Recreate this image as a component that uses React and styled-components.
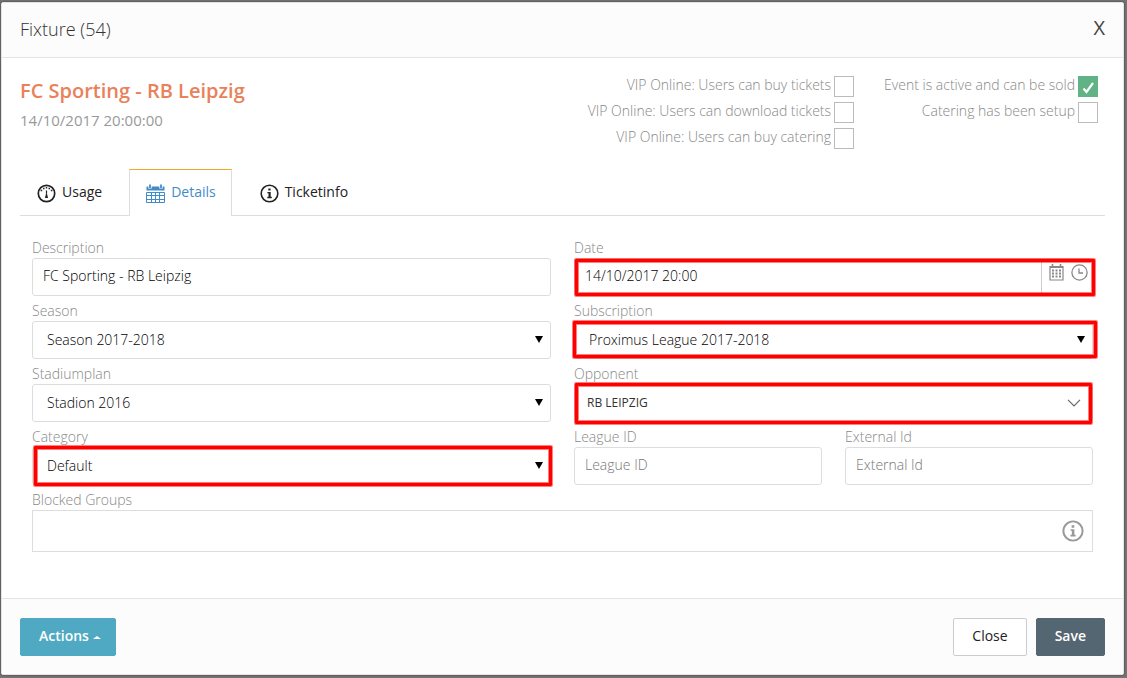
import React, { useState } from 'react';
import styled, { createGlobalStyle } from 'styled-components';

const GlobalStyle = createGlobalStyle`
	*, *::before, *::after {
		box-sizing: border-box;
	}

	body {
		margin: 0;
		background: #747474;
		color: #333;
		font-family: 'Open Sans', 'Liberation Sans', sans-serif;
		font-size: 14px;
		line-height: 20px;
	}

	button, input, select {
		margin: 0;
		font: inherit;
		color: inherit;
	}
`;

const Backdrop = styled.div`
	display: flex;
	min-height: 100vh;
	padding: 2px 3px 3px 1px;
`;

const Modal = styled.section`
	flex: 1;
	display: flex;
	flex-direction: column;
	border: 1px solid #e4e4e4;
	border-radius: 2px;
	background: #fff;
	box-shadow: 0 0 2px rgba(0, 0, 0, 0.6);
	overflow: hidden;
`;

const Header = styled.header`
	display: flex;
	justify-content: space-between;
	align-items: center;
	height: 55px;
	padding: 0 18px 2px;
	border-bottom: 1px solid #e5e5e5;
	background: #fcfcfc;
`;

const Title = styled.h1`
	margin: 0;
	font-size: 18px;
	font-weight: 300;
`;

const CloseIcon = styled.button`
	padding: 0 0 2px;
	border: 0;
	background: none;
	color: #444;
	font-size: 20px;
	cursor: pointer;
`;

const Body = styled.div`
	flex: 1;
	padding: 18px 18px 0;
`;

const Summary = styled.div`
	display: flex;
	justify-content: space-between;
	min-height: 93px;
`;

const EventName = styled.h2`
	margin: 0;
	color: #e9815a;
	font-size: 20px;
	font-weight: 600;
	line-height: 30px;
`;

const EventDate = styled.p`
	margin: 0;
	color: #999;
	font-size: 15px;
	line-height: 28px;
`;

const Flags = styled.div`
	display: flex;
	gap: 30px;
	padding-right: 7px;
`;

const FlagColumn = styled.div`
	display: flex;
	flex-direction: column;
	align-items: flex-end;
	gap: 5px;
`;

const FlagLabel = styled.label`
	display: flex;
	gap: 3px;
	height: 21px;
	color: #888;
	font-weight: 300;
	line-height: 18px;
`;

const FlagBox = styled.input`
	appearance: none;
	width: 20px;
	height: 21px;
	border: 1px solid #bbb;
	background: #fff;

	&:checked {
		border-color: #5fb384;
		background: #5fb384;
	}
`;

const BoxWrap = styled.span`
	position: relative;
	display: flex;
`;

const Tick = styled.svg`
	position: absolute;
	left: 4px;
	top: 5px;
	pointer-events: none;
`;

const Tabs = styled.nav`
	display: flex;
	gap: 11px;
	height: 47px;
	border-bottom: 1px solid #ddd;
`;

const Tab = styled.button`
	display: flex;
	align-items: center;
	gap: 6px;
	height: 47px;
	padding: 0 15px 0 16px;
	border: 1px solid transparent;
	border-bottom: 0;
	border-color: ${prop => (prop.$active ? '#f5a623 #ddd #fff' : 'transparent')};
	background: ${prop => (prop.$active ? '#fff' : 'none')};
	color: ${prop => (prop.$active ? '#428bca' : '#222')};
	cursor: pointer;
`;

const TabText = styled.span`
	padding-bottom: 2px;
`;

const Form = styled.form`
	display: grid;
	grid-template-columns: repeat(4, 1fr);
	gap: 5px 23px;
	padding: 22px 12px 0;
`;

const FieldWrap = styled.div`
	grid-column: span ${prop => prop.$span || 2};
`;

const Label = styled.label`
	display: block;
	color: #888;
	font-weight: 300;
`;

const Control = styled.div`
	position: relative;
	display: flex;
`;

const TextInput = styled.input`
	flex: 1;
	min-width: 0;
	height: ${prop => (prop.$tall ? 42 : 38)}px;
	padding: 0 10px 3px;
	border: 1px solid #ddd;
	border-radius: ${prop => (prop.$tall ? 0 : 3)}px;
	background: #fff;
	color: #000;
	font-weight: 300;

	&::placeholder {
		color: #777;
		opacity: 1;
	}
`;

const Select = styled.select`
	appearance: none;
	flex: 1;
	min-width: 0;
	height: 38px;
	padding: 0 14px;
	border: 1px solid #ddd;
	border-radius: 3px;
	background: #fff;
	color: #000;
	font-weight: 300;
`;

const ComboSelect = styled(Select)`
	padding: 0 12px 1px;
	color: #333;
	font-size: 12px;
	font-weight: 400;
`;

const Arrow = styled.svg`
	position: absolute;
	right: ${prop => prop.$right || 8}px;
	top: 15px;
	pointer-events: none;
`;

const Pickers = styled.div`
	position: absolute;
	top: 1px;
	right: 1px;
	bottom: 1px;
	display: flex;
	align-items: flex-start;
	gap: 7px;
	padding: 5px 4px 0 7px;
	border-left: 1px solid #ccc;
`;

const PickerButton = styled.button`
	display: flex;
	padding: 0;
	border: 0;
	background: none;
	color: #888;
	cursor: pointer;
`;

const Hint = styled.span`
	position: absolute;
	top: 10px;
	right: 9px;
	display: flex;
	color: #999;
`;

const Outline = styled.span`
	position: absolute;
	inset: ${prop => prop.$inset};
	border: 3px solid #f00;
	border-radius: 1px;
	box-shadow: 0 0 0 1px rgba(255, 0, 0, 0.5), inset 0 0 0 1px rgba(255, 0, 0, 0.5);
	pointer-events: none;
`;

const Footer = styled.footer`
	display: flex;
	gap: 9px;
	padding: 19px 18px 18px;
	border-top: 1px solid #e5e5e5;
	background: #fcfcfc;
`;

const Button = styled.button`
	display: flex;
	align-items: center;
	gap: 5px;
	height: 38px;
	padding: 0 18px 2px;
	border: 1px solid ${prop => prop.$border || prop.$color};
	border-radius: 2px;
	background: ${prop => prop.$color};
	color: ${prop => (prop.$border ? '#222' : '#fff')};
	font-weight: ${prop => (prop.$border ? 400 : 600)};
	cursor: pointer;
`;

const ActionsButton = styled(Button)`
	margin-right: auto;
	padding: 0 14px 2px 18px;
	gap: 4px;
`;

const Caret = styled.svg`
	margin-top: 3px;
`;

const GaugeIcon = () => (
	<svg width="19" height="19" viewBox="0 0 19 19" fill="none" stroke="currentColor">
		<circle cx="9.5" cy="9.5" r="8.2" strokeWidth="1.7" />
		<path d="M9.5 6.5v3" strokeWidth="1.2" />
		<path d="M9.5 8l1.6 6h-3.2z" fill="currentColor" stroke="none" />
		<path d="M3.6 6.6h1.6M13.8 6.6h1.6M6 4.6h1.5M11.5 4.6H13M8.8 3.8h1.4" strokeWidth="1.5" />
	</svg>
);

const InfoIcon = ({ size, weight }) => (
	<svg width={size} height={size} viewBox="0 0 19 19" fill="none" stroke="currentColor">
		<circle cx="9.5" cy="9.5" r="8.3" strokeWidth={weight} />
		<path d="M8.3 4.6h2.3v2H8.3zM7.4 8h3.3v4.8h1.1v1.4H7.3v-1.4h1.2V9.3H7.4z" fill="currentColor" stroke="none" />
	</svg>
);

const CalendarIcon = () => (
	<svg width="19" height="19" viewBox="0 0 19 19" fill="none" stroke="currentColor">
		<path d="M.5 2.5h18v4H.5z" fill="currentColor" stroke="none" />
		<path d="M4 .5v4M15 .5v4" stroke="#fff" strokeWidth="3.4" />
		<path d="M4 .5v3.6M15 .5v3.6" strokeWidth="1.8" />
		<path d="M.5 8.5h18v10H.5zM.5 11.5h18M.5 15.5h18M5.5 8.5v10M9.5 8.5v10M13.5 8.5v10" />
	</svg>
);

const DatePickerIcon = () => (
	<svg width="15" height="17" viewBox="0 0 15 17" fill="none" stroke="currentColor">
		<path d="M1 2.5h13v13.5H1z" strokeWidth="1.2" />
		<path d="M1 3h13" strokeWidth="2" />
		<path d="M3.5 0v2M11.5 0v2" strokeWidth="1.6" />
		<path d="M3 6.5h9M3 9.5h9M3 12.5h9" strokeWidth="2" strokeDasharray="2 1.5" />
	</svg>
);

const ClockIcon = () => (
	<svg width="17" height="17" viewBox="0 0 17 17" fill="none" stroke="currentColor">
		<circle cx="8.5" cy="8.5" r="7.6" strokeWidth="1.3" />
		<path d="M8 4.5V9h4" strokeWidth="1.3" />
	</svg>
);

const Flag = ({ text, defaultChecked }) => {
	const [checked, setChecked] = useState(!!defaultChecked);

	return (
		<FlagLabel>
			{text}
			<BoxWrap>
				<FlagBox type="checkbox" checked={checked} onChange={() => setChecked(!checked)} />
				{checked && (
					<Tick width="13" height="13" viewBox="0 0 13 13" fill="none">
						<path d="M1.5 7.5l3 3.5L11 2" stroke="#fff" strokeWidth="2.2" />
					</Tick>
				)}
			</BoxWrap>
		</FlagLabel>
	);
};

const Field = ({ id, label, span, outline, children }) => (
	<FieldWrap $span={span}>
		<Label htmlFor={id}>{label}</Label>
		<Control>
			{children}
			{outline && <Outline $inset={outline} />}
		</Control>
	</FieldWrap>
);

const SelectField = ({ id, label, value, outline }) => (
	<Field id={id} label={label} outline={outline}>
		<Select id={id}>
			<option>{value}</option>
		</Select>
		<Arrow width="8" height="7" viewBox="0 0 8 7">
			<path d="M0 0h8L4 7z" fill="#000" />
		</Arrow>
	</Field>
);

const tabs = [
	{ name: 'Usage', icon: <GaugeIcon /> },
	{ name: 'Details', icon: <CalendarIcon /> },
	{ name: 'Ticketinfo', icon: <InfoIcon size={19} weight={1.6} /> },
];

const App = () => {
	const [active, setActive] = useState('Details');

	return (
		<Backdrop>
			<GlobalStyle />
			<Modal>
				<Header>
					<Title>Fixture (54)</Title>
					<CloseIcon type="button">X</CloseIcon>
				</Header>
				<Body>
					<Summary>
						<div>
							<EventName>FC Sporting - RB Leipzig</EventName>
							<EventDate>14/10/2017 20:00:00</EventDate>
						</div>
						<Flags>
							<FlagColumn>
								<Flag text="VIP Online: Users can buy tickets" />
								<Flag text="VIP Online: Users can download tickets" />
								<Flag text="VIP Online: Users can buy catering" />
							</FlagColumn>
							<FlagColumn>
								<Flag text="Event is active and can be sold" defaultChecked />
								<Flag text="Catering has been setup" />
							</FlagColumn>
						</Flags>
					</Summary>
					<Tabs>
						{tabs.map(({ name, icon }) => (
							<Tab key={name} type="button" $active={name === active} onClick={() => setActive(name)}>
								{icon}
								<TabText>{name}</TabText>
							</Tab>
						))}
					</Tabs>
					<Form>
						<Field id="description" label="Description">
							<TextInput id="description" defaultValue="FC Sporting - RB Leipzig" />
						</Field>
						<Field id="date" label="Date" outline="1px -2px 0 1px">
							<TextInput id="date" defaultValue="14/10/2017 20:00" />
							<Pickers>
								<PickerButton type="button" aria-label="Pick date"><DatePickerIcon /></PickerButton>
								<PickerButton type="button" aria-label="Pick time"><ClockIcon /></PickerButton>
							</Pickers>
						</Field>
						<SelectField id="season" label="Season" value="Season 2017-2018" />
						<SelectField id="subscription" label="Subscription" value="Proximus League 2017-2018" outline="0 -4px 1px -1px" />
						<SelectField id="stadiumplan" label="Stadiumplan" value="Stadion 2016" />
						<Field id="opponent" label="Opponent" outline="-1px 1px -2px 1px">
							<ComboSelect id="opponent">
								<option>RB LEIPZIG</option>
							</ComboSelect>
							<Arrow $right={12} width="14" height="8" viewBox="0 0 14 8" fill="none">
								<path d="M1 .8l6 6 6-6" stroke="#666" strokeWidth="1.2" />
							</Arrow>
						</Field>
						<SelectField id="category" label="Category" value="Default" outline="-1px -1px -1px 2px" />
						<Field id="league" label="League ID" span={1}>
							<TextInput id="league" placeholder="League ID" />
						</Field>
						<Field id="external" label="External Id" span={1}>
							<TextInput id="external" placeholder="External Id" />
						</Field>
						<Field id="groups" label="Blocked Groups" span={4}>
							<TextInput id="groups" $tall />
							<Hint><InfoIcon size={22} weight={1.7} /></Hint>
						</Field>
					</Form>
				</Body>
				<Footer>
					<ActionsButton type="button" $color="#4fa9c2">
						Actions
						<Caret width="8" height="3" viewBox="0 0 8 3">
							<path d="M0 3l4-3 4 3z" fill="#fff" />
						</Caret>
					</ActionsButton>
					<Button type="button" $color="#fff" $border="#ccc">Close</Button>
					<Button type="button" $color="#546672">Save</Button>
				</Footer>
			</Modal>
		</Backdrop>
	);
};

export default App;
